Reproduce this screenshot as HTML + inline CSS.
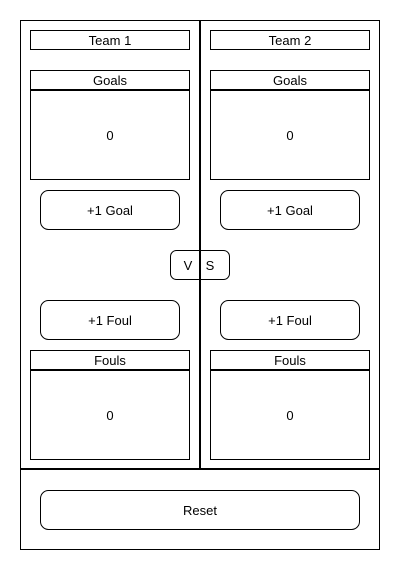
<!DOCTYPE html>
<html><head><style>
body{margin:0;background:#fff;}
svg{display:block;}
text{font-family:"Liberation Sans",Arial,sans-serif;font-size:13px;fill:#000;text-anchor:middle;}
</style></head><body>
<svg width="400" height="570" viewBox="0 0 400 570">
<g fill="none" stroke="#000" stroke-width="1">
<rect x="20.5" y="20.5" width="359" height="529"/>
<rect x="30.5" y="30.5" width="159" height="19"/>
<rect x="210.5" y="30.5" width="159" height="19"/>
<rect x="30.5" y="70.5" width="159" height="109"/>
<rect x="210.5" y="70.5" width="159" height="109"/>
<rect x="40.5" y="190.5" width="139" height="39" rx="8"/>
<rect x="220.5" y="190.5" width="139" height="39" rx="8"/>
<rect x="170.5" y="250.5" width="59" height="29" rx="6"/>
<rect x="40.5" y="300.5" width="139" height="39" rx="8"/>
<rect x="220.5" y="300.5" width="139" height="39" rx="8"/>
<rect x="30.5" y="350.5" width="159" height="109"/>
<rect x="210.5" y="350.5" width="159" height="109"/>
<rect x="40.5" y="490.5" width="319" height="39" rx="8"/>
</g>
<g stroke="#000" stroke-width="2">
<line x1="200" y1="20" x2="200" y2="470"/>
<line x1="20" y1="469" x2="380" y2="469"/>
<line x1="30" y1="90" x2="190" y2="90"/>
<line x1="210" y1="90" x2="370" y2="90"/>
<line x1="30" y1="370" x2="190" y2="370"/>
<line x1="210" y1="370" x2="370" y2="370"/>
</g>
<text x="110" y="45">Team 1</text>
<text x="290" y="45">Team 2</text>
<text x="110" y="85">Goals</text>
<text x="290" y="85">Goals</text>
<text x="110" y="140">0</text>
<text x="290" y="140">0</text>
<text x="110" y="215">+1 Goal</text>
<text x="290" y="215">+1 Goal</text>
<text x="188" y="270">V</text>
<text x="210" y="270">S</text>
<text x="110" y="325">+1 Foul</text>
<text x="290" y="325">+1 Foul</text>
<text x="110" y="365">Fouls</text>
<text x="290" y="365">Fouls</text>
<text x="110" y="420">0</text>
<text x="290" y="420">0</text>
<text x="200" y="515">Reset</text>
</svg>
</body></html>
